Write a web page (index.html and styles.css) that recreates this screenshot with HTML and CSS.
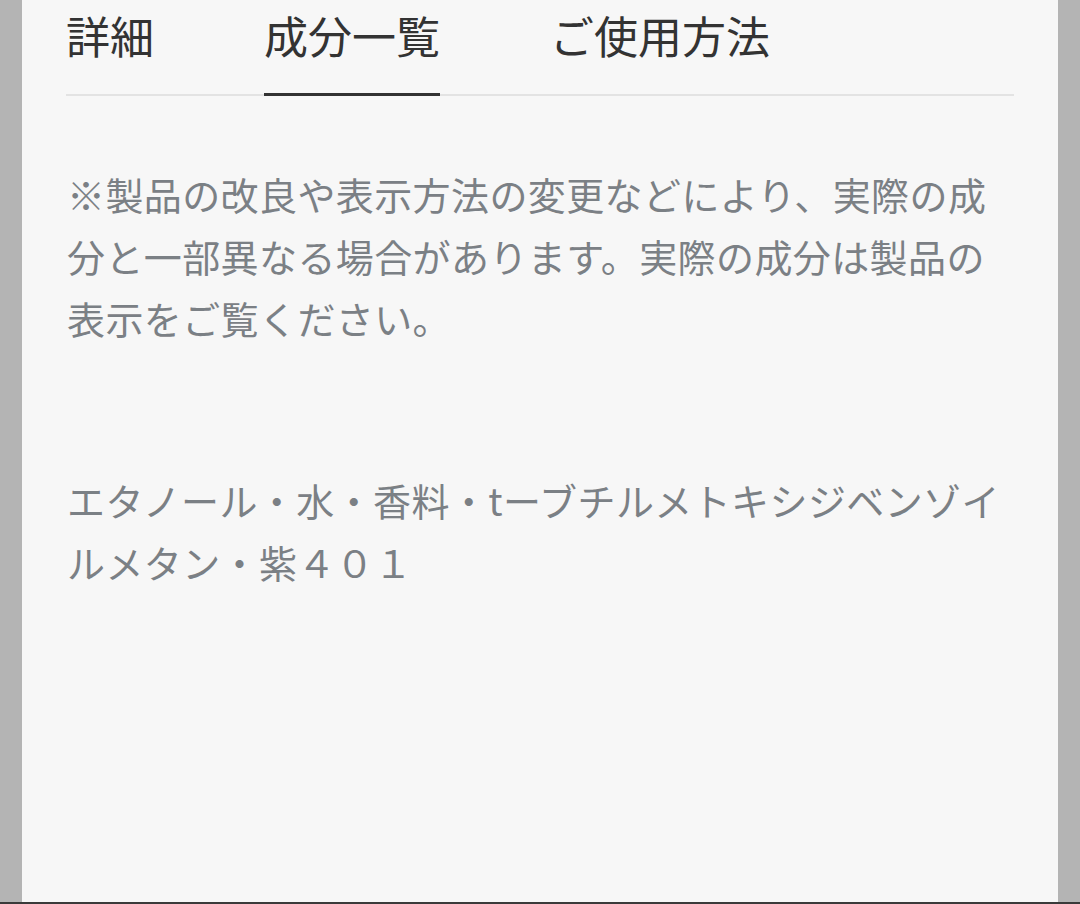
FILE: index.html
```html
<!DOCTYPE html>
<html lang="ja">
<head>
    <meta charset="UTF-8">
    <meta name="viewport" content="width=device-width, initial-scale=1.0">
    <title>成分一覧</title>
    <link rel="stylesheet" href="styles.css">
</head>
<body>
    <div class="screen">
        <div class="panel">
            <!-- Tabs -->
            <div class="tabs">
                <div class="tab">詳細</div>
                <div class="tab active">成分一覧</div>
                <div class="tab">ご使用方法</div>
            </div>

            <!-- Ingredients -->
            <p class="note">※製品の改良や表示方法の変更などにより、実際の成分と一部異なる場合があります。実際の成分は製品の表示をご覧ください。</p>
            <p class="ingredients">エタノール・水・香料・tーブチルメトキシジベンゾイルメタン・紫４０１</p>
        </div>
    </div>
</body>
</html>
```

FILE: styles.css
```css
html, body {
    margin: 0;
    padding: 0;
}
body {
    font-family: "Noto Sans CJK JP", "Noto Sans", sans-serif;
    background-color: #b4b4b4;
    overflow: hidden;
}
.screen {
    height: 904px;
    box-sizing: border-box;
    padding: 0 22px;
    border-bottom: 2px solid #3a3a3a;
    display: flex;
}
.panel {
    flex: 1;
    background-color: #f7f7f7;
    padding: 0 44px;
}
.tabs {
    display: flex;
    gap: 110px;
    border-bottom: 2px solid #e3e3e3;
}
.tab {
    font-size: 44px;
    line-height: 44px;
    color: #333;
    padding: 13px 0 36px;
    border-bottom: 3px solid transparent;
    margin-bottom: -2px;
}
.tab.active {
    border-bottom-color: #333;
}
.note, .ingredients {
    margin: 0;
    font-size: 38px;
    line-height: 62px;
    letter-spacing: 0.4px;
    color: #7b8085;
    padding-left: 1px;
}
.note {
    margin-top: 67px;
}
.ingredients {
    margin-top: 120px;
}
```
